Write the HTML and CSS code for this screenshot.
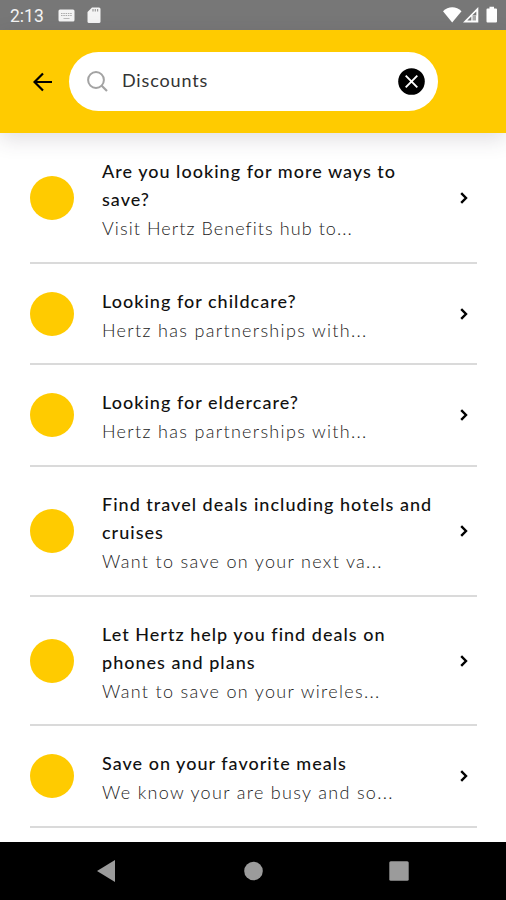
FILE: index.html
```
<!DOCTYPE html>
<html lang="en">
<head>
  <meta charset="UTF-8">
  <meta name="viewport" content="width=device-width, initial-scale=1.0">
  <title>Discounts</title>
  <link rel="stylesheet" href="styles.css">
</head>
<body>
  <div class="screen">
    <div class="status-bar">
      <span class="time">2:13</span>
      <svg class="keyboard-icon" width="17" height="13" viewBox="0 0 17 13">
        <rect x="0.5" y="0.5" width="16" height="12" rx="1.5" fill="#f4f4f4"/>
        <path d="M3 4.5h11M3 6.5h11" stroke="#aaa" stroke-width="1.2" stroke-dasharray="1.5 0.8"/>
        <path d="M5.5 9.5h6" stroke="#bbb"/>
      </svg>
      <svg class="sd-icon" width="14" height="17" viewBox="0 0 14 17">
        <path d="M5 0.5h7a1.5 1.5 0 0 1 1.5 1.5v12.5a1.5 1.5 0 0 1-1.5 1.5h-10a1.5 1.5 0 0 1-1.5-1.5v-9.5z" fill="#f4f4f4"/>
        <path d="M6 2v2.5M8.3 2v2.5M10.6 2v2.5" stroke="#999" stroke-width="1.2"/>
      </svg>
      <svg class="signal-icons" width="56" height="18" viewBox="0 0 56 18">
        <path d="M0 5.2C5 0 13.500 0 18.500 5.200L9.200 16.500z" fill="#fff"/>
        <path d="M35.300 1v15.500H20z" fill="#fff"/>
        <path d="M33.300 5.500v4h-4.300zM28.300 10.500v4h-4z" fill="#777"/>
        <path d="M29.500 10h3.500v4.500h-3.500z" fill="#aaa"/>
        <path d="M46.500 0.800h4.500v1.700h2a1 1 0 0 1 1 1v12a1 1 0 0 1-1 1h-8.500a1 1 0 0 1-1-1v-12a1 1 0 0 1 1-1h2z" fill="#fff"/>
      </svg>
    </div>

    <div class="header">
      <svg class="back-icon" width="20" height="20" viewBox="0 0 20 20">
        <path d="M19 10H2M10 1.500L1.500 10L10 18.500" fill="none" stroke="#000" stroke-width="2.200"/>
      </svg>
      <div class="search">
        <svg width="21" height="21" viewBox="0 0 21 21">
          <circle cx="9" cy="9" r="7.900" fill="none" stroke="#a3a3a3" stroke-width="2"/>
          <path d="M14.500 14.500L20 20" stroke="#a3a3a3" stroke-width="2.200"/>
        </svg>
        <span class="query">Discounts</span>
        <svg class="clear-icon" width="27" height="27" viewBox="0 0 27 27">
          <circle cx="13.500" cy="13.500" r="13.300" fill="#000"/>
          <path d="M7.700 7.700L19.300 19.300M19.300 7.700L7.700 19.300" stroke="#fff" stroke-width="1.900"/>
        </svg>
      </div>
    </div>

    <div class="list">
      <div class="item">
        <div class="dot"></div>
        <div class="text">
          <div class="title">Are you looking for more ways to<br>save?</div>
          <div class="desc tight">Visit Hertz Benefits hub to...</div>
        </div>
        <svg class="chevron" width="8" height="12" viewBox="0 0 8 12"><path d="M1.200 1.200L6 6L1.200 10.800"/></svg>
      </div>
      <div class="item">
        <div class="dot"></div>
        <div class="text">
          <div class="title">Looking for childcare?</div>
          <div class="desc">Hertz has partnerships with...</div>
        </div>
        <svg class="chevron" width="8" height="12" viewBox="0 0 8 12"><path d="M1.200 1.200L6 6L1.200 10.800"/></svg>
      </div>
      <div class="item">
        <div class="dot"></div>
        <div class="text">
          <div class="title">Looking for eldercare?</div>
          <div class="desc">Hertz has partnerships with...</div>
        </div>
        <svg class="chevron" width="8" height="12" viewBox="0 0 8 12"><path d="M1.200 1.200L6 6L1.200 10.800"/></svg>
      </div>
      <div class="item">
        <div class="dot"></div>
        <div class="text">
          <div class="title">Find travel deals including hotels and<br>cruises</div>
          <div class="desc">Want to save on your next va...</div>
        </div>
        <svg class="chevron" width="8" height="12" viewBox="0 0 8 12"><path d="M1.200 1.200L6 6L1.200 10.800"/></svg>
      </div>
      <div class="item">
        <div class="dot"></div>
        <div class="text">
          <div class="title">Let Hertz help you find deals on<br>phones and plans</div>
          <div class="desc">Want to save on your wireles...</div>
        </div>
        <svg class="chevron" width="8" height="12" viewBox="0 0 8 12"><path d="M1.200 1.200L6 6L1.200 10.800"/></svg>
      </div>
      <div class="item">
        <div class="dot"></div>
        <div class="text">
          <div class="title">Save on your favorite meals</div>
          <div class="desc">We know your are busy and so...</div>
        </div>
        <svg class="chevron" width="8" height="12" viewBox="0 0 8 12"><path d="M1.200 1.200L6 6L1.200 10.800"/></svg>
      </div>
    </div>

    <div class="nav-bar">
      <svg width="20" height="22" viewBox="0 0 20 22"><path d="M0 11L18 0v22z" fill="#9b9b9b"/></svg>
      <svg width="20" height="20" viewBox="0 0 20 20"><circle cx="10.500" cy="10" r="9.300" fill="#9b9b9b"/></svg>
      <svg width="20" height="20" viewBox="0 0 20 20"><rect x="0.300" y="0.300" width="19.400" height="19.400" rx="1.500" fill="#9b9b9b"/></svg>
    </div>
  </div>
</body>
</html>
```
FILE: styles.css
```
* {
  box-sizing: border-box;
}
body {
  margin: 0;
  background-color: #fff;
  font-family: Lato, sans-serif;
}
.screen {
  width: 506px;
  height: 900px;
  display: flex;
  flex-direction: column;
  overflow: hidden;
}
.status-bar {
  height: 30px;
  flex: none;
  display: flex;
  align-items: center;
  padding: 0 7px 0 10px;
  background-color: #777;
  color: #f4f4f4;
}
.time {
  width: 47px;
  font-family: Roboto, sans-serif;
  font-size: 17.5px;
  padding-top: 2px;
}
.keyboard-icon {
  margin: 1px 12px 0 1px;
}
.sd-icon {
  margin-top: 1px;
}
.signal-icons {
  margin-left: auto;
}
.header {
  height: 103px;
  flex: none;
  display: flex;
  align-items: center;
  padding-left: 33px;
  background-color: #ffcb00;
  box-shadow: 0 6px 20px rgba(60, 50, 70, 0.16);
}
.search {
  width: 369px;
  height: 59px;
  display: flex;
  align-items: center;
  margin-left: 16px;
  padding: 0 13px 0 18px;
  border-radius: 30px;
  background-color: #fff;
}
.query {
  margin-left: 14px;
  font-size: 18px;
  letter-spacing: 0.85px;
  color: #333;
  padding-bottom: 3px;
}
.clear-icon {
  margin-left: auto;
}
.list {
  flex: 1;
  padding: 1px 29px 0 30px;
}
.item {
  display: flex;
  align-items: center;
  border-bottom: 2px solid #dadada;
}
.dot {
  width: 44px;
  height: 44px;
  flex: none;
  border-radius: 50%;
  background-color: #ffcb00;
}
.text {
  flex: 1;
  margin-left: 28px;
  padding: 23px 0 17.700px;
  white-space: nowrap;
}
.title {
  font-size: 18px;
  font-weight: 500;
  line-height: 28px;
  letter-spacing: 1.01px;
  color: #111;
}
.desc {
  font-size: 18px;
  font-weight: 300;
  line-height: 31px;
  letter-spacing: 1.32px;
  color: #222;
}
.desc.tight {
  letter-spacing: 1.07px;
}
.chevron {
  margin-right: 9px;
  fill: none;
  stroke: #000;
  stroke-width: 2.4;
}
.nav-bar {
  height: 58px;
  flex: none;
  display: flex;
  align-items: center;
  justify-content: space-between;
  padding: 0 97px;
  background-color: #000;
}
```
